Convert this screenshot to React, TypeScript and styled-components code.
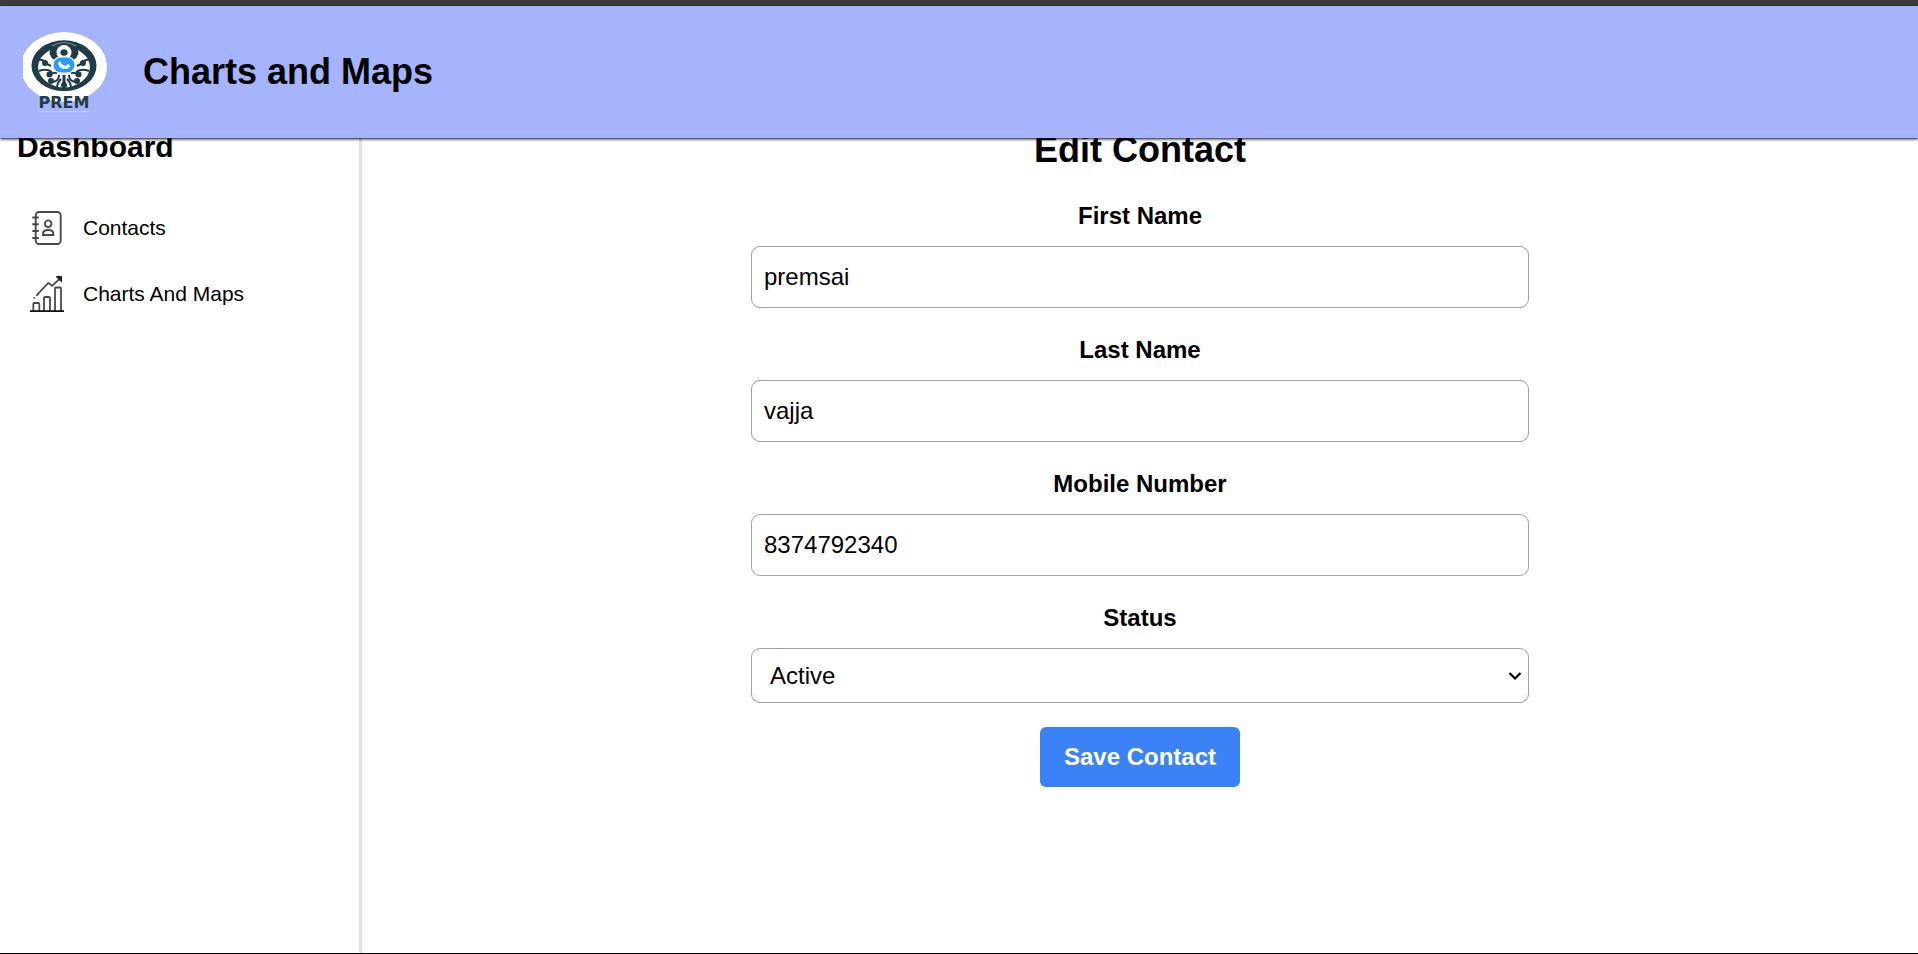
import React, { useState } from "react";
import styled, { createGlobalStyle } from "styled-components";

const GlobalStyle = createGlobalStyle`
  *, *::before, *::after { box-sizing: border-box; }
  body {
    margin: 0;
    background: #fff;
    color: #000;
    font-family: "Liberation Sans", Arial, sans-serif;
  }
`;

const Page = styled.div`
  display: flex;
  flex-direction: column;
  min-height: 100vh;
  border-top: 6px solid #3c3c3c;
  border-bottom: 1px solid #000;
`;

const Header = styled.header`
  position: relative;
  z-index: 1;
  flex: none;
  display: flex;
  align-items: center;
  gap: 36px;
  height: 132px;
  padding: 0 23px;
  background: #a5b4fc;
  box-shadow: 0 1px 3px #000;
`;

const Title = styled.h1`
  margin: 0;
  font-size: 36px;
  line-height: 48px;
`;

const Body = styled.div`
  flex: 1;
  display: flex;
  margin-top: -12px;
`;

const Sidebar = styled.aside`
  flex: none;
  width: 362px;
  border-right: 3px solid #e0e0e5;
`;

const SidebarTitle = styled.h2`
  margin: 0 0 27px;
  padding: 0 17px;
  font-size: 30px;
  line-height: 42px;
`;

const NavLink = styled.a`
  display: flex;
  align-items: center;
  gap: 17px;
  height: 66px;
  padding: 0 30px;
  color: inherit;
  font-size: 21px;
  line-height: 30px;
  text-decoration: none;
`;

const Main = styled.main`
  flex: 1;
`;

const Form = styled.form`
  display: flex;
  flex-direction: column;
  align-items: center;
  gap: 24px;
`;

const FormTitle = styled.h2`
  margin: 0;
  font-size: 36px;
  line-height: 48px;
`;

const Field = styled.div`
  display: flex;
  flex-direction: column;
  gap: 12px;
  width: 50%;
`;

const Label = styled.label`
  font-size: 24px;
  font-weight: 700;
  line-height: 36px;
  text-align: center;
`;

const Input = styled.input`
  width: 100%;
  padding: 12px;
  border: 1px solid #9ca3af;
  border-radius: 9px;
  background: #fff;
  color: #000;
  font: 24px/36px "Liberation Sans", Arial, sans-serif;
`;

const SelectBox = styled.div`
  position: relative;
  display: flex;
`;

const Select = styled.select`
  appearance: none;
  width: 100%;
  height: 55px;
  padding: 0 36px 0 18px;
  border: 1px solid #9ca3af;
  border-radius: 9px;
  background: #fff;
  color: #000;
  font: 24px "Liberation Sans", Arial, sans-serif;
`;

const Chevron = styled.svg`
  position: absolute;
  top: 50%;
  right: 6px;
  margin-top: -8px;
  pointer-events: none;
`;

const SaveButton = styled.button`
  padding: 12px 24px;
  border: 0;
  border-radius: 6px;
  background: #3b82f6;
  color: #fff;
  font: 700 24px/36px "Liberation Sans", Arial, sans-serif;
`;

const LogoText = styled.text`
  fill: #213c47;
  font: 700 16px "DejaVu Sans", sans-serif;
  text-anchor: middle;
`;

const Logo = () => (
  <svg width="84" height="84" viewBox="0 0 84 84" role="img" aria-label="Prem">
    <ellipse cx="41" cy="37" rx="43" ry="35" fill="#fff" />
    <ellipse cx="41" cy="35.7" rx="32.5" ry="25.4" fill="#213c47" />
    <path d="M29 16q12-7 24 0" fill="none" stroke="#8fa3ad" strokeWidth="0.8" />
    <path
      d="M27 20Q15 27 15 37q1 13 17 19 9 3 18 0 16-6 17-19 0-10-12-17l-2 8-8 2h-8l-8-2z"
      fill="#fff"
    />
    <g fill="none" stroke="#213c47" strokeWidth="2">
      <path d="M28 21q0 6 5 8M54 21q0 6-5 8" strokeWidth="3" />
      <path d="M15 30q6-1 7 3l6 3M67 30q-6-1-7 3l-6 3" />
      <path d="M16 41q7-3 13 1M66 41q-7-3-13 1" />
      <path d="M27 45q2-3 7-2M55 45q-2-3-7-2" />
      <path d="M28 52q8 0 8-7M54 52q-8 0-8-7" />
      <path d="M41 45v13" strokeWidth="3" />
      <path d="M34 58q0-5 4-9M48 58q0-5-4-9" />
    </g>
    <g fill="#213c47">
      <circle cx="22" cy="33" r="3" />
      <circle cx="60" cy="33" r="3" />
      <circle cx="26.500" cy="44.500" r="3" />
      <circle cx="55.500" cy="44.500" r="3" />
      <circle cx="28" cy="51" r="3" />
      <circle cx="54" cy="51" r="3" />
      <circle cx="41" cy="55" r="3" />
    </g>
    <circle cx="41" cy="22.500" r="7.500" fill="#fff" />
    <ellipse cx="41" cy="22.500" rx="3.600" ry="3.200" fill="#213c47" />
    <rect x="29" y="26.500" width="24" height="17" rx="8.500" fill="#fff" />
    <rect x="30.500" y="27.500" width="21" height="15" rx="7.500" fill="#2a9df0" />
    <path d="M35 33q1 6 7 6 5 0 5-4l-2-1-2 2q-3 0-5-3l-1-2z" fill="#fff" />
    <LogoText x="41" y="77.500">PREM</LogoText>
    <path d="M15 81.700h51" stroke="#c9d4f4" />
  </svg>
);

const ContactsIcon = () => (
  <svg width="36" height="36" viewBox="0 0 36 36" fill="none" stroke="#4a4a4a" strokeWidth="1.9" aria-hidden="true">
    <rect x="5.700" y="2" width="25" height="32" rx="3.500" />
    <path d="M2.300 7.500h6.500M2.300 14.200h6.500M2.300 21h6.500M2.300 28h6.500" />
    <circle cx="18.200" cy="13.700" r="3.300" />
    <path d="M13 25v-1q0-4 5.200-4t5.200 4v1z" />
  </svg>
);

const ChartIcon = () => (
  <svg width="36" height="36" viewBox="0 0 36 36" fill="none" stroke="#4a4a4a" strokeWidth="1.800" aria-hidden="true">
    <path d="M3.300 35v-7q0-1 1-1h4q1 0 1 1v7M14 35V22q0-1 1-1h4q1 0 1 1v13M25 35V12.500q0-1 1-1h4q1 0 1 1V35" />
    <path d="M6.300 19.700 18.300 6.900l3.900 2.900 7.300-7M3.700 22.300l1-1" />
    <path d="M26 0h6v6l-1.500-.5-4-4z" fill="#222" stroke="none" />
    <path d="M0 35.200h34" stroke="#111" />
  </svg>
);

export default function App() {
  const [contact, setContact] = useState({
    firstName: "premsai",
    lastName: "vajja",
    mobile: "8374792340",
    status: "Active",
  });
  const update = (e: React.ChangeEvent<HTMLInputElement | HTMLSelectElement>) =>
    setContact({ ...contact, [e.target.id]: e.target.value });

  return (
    <>
      <GlobalStyle />
      <Page>
        <Header>
          <Logo />
          <Title>Charts and Maps</Title>
        </Header>
        <Body>
          <Sidebar>
            <SidebarTitle>Dashboard</SidebarTitle>
            <nav>
              <NavLink href="#contacts"><ContactsIcon />Contacts</NavLink>
              <NavLink href="#charts"><ChartIcon />Charts And Maps</NavLink>
            </nav>
          </Sidebar>
          <Main>
            <Form onSubmit={(e) => e.preventDefault()}>
              <FormTitle>Edit Contact</FormTitle>
              <Field>
                <Label htmlFor="firstName">First Name</Label>
                <Input id="firstName" value={contact.firstName} onChange={update} />
              </Field>
              <Field>
                <Label htmlFor="lastName">Last Name</Label>
                <Input id="lastName" value={contact.lastName} onChange={update} />
              </Field>
              <Field>
                <Label htmlFor="mobile">Mobile Number</Label>
                <Input id="mobile" type="tel" value={contact.mobile} onChange={update} />
              </Field>
              <Field>
                <Label htmlFor="status">Status</Label>
                <SelectBox>
                  <Select id="status" value={contact.status} onChange={update}>
                    <option>Active</option>
                    <option>Inactive</option>
                  </Select>
                  <Chevron width="16" height="16" viewBox="0 0 16 16" aria-hidden="true">
                    <path d="m2.500 5 5.500 5.500L13.500 5" fill="none" stroke="#000" strokeWidth="2.200" />
                  </Chevron>
                </SelectBox>
              </Field>
              <SaveButton type="submit">Save Contact</SaveButton>
            </Form>
          </Main>
        </Body>
      </Page>
    </>
  );
}
